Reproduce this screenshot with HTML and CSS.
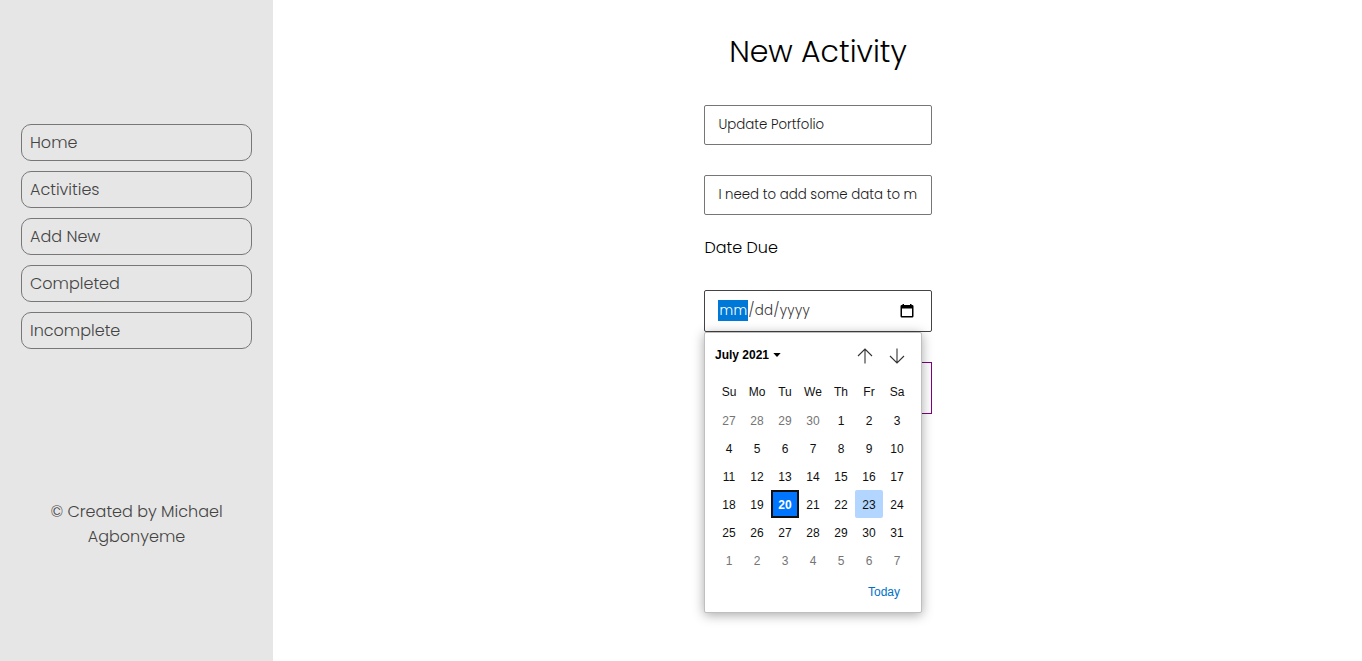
FILE: index.html
```html
<!DOCTYPE html>
<html lang="en">
<head>
<meta charset="utf-8">
<title>New Activity</title>
<link rel="stylesheet" href="styles.css">
</head>
<body>
<aside class="sidebar">
  <nav class="nav">
    <a class="nav-link">Home</a>
    <a class="nav-link">Activities</a>
    <a class="nav-link">Add New</a>
    <a class="nav-link">Completed</a>
    <a class="nav-link">Incomplete</a>
  </nav>
  <footer class="credit">© Created by Michael<br>Agbonyeme</footer>
</aside>
<main class="main">
  <h1 class="title">New Activity</h1>
  <form class="form">
    <div class="field">Update Portfolio</div>
    <div class="field details">I need to add some data to m</div>
    <div class="label">Date Due</div>
    <div class="field date">
      <span class="date-text"><span class="month">mm</span><span class="rest">/dd/yyyy</span></span>
      <svg class="cal-icon" width="14" height="14" viewBox="0 0 14 14"><path d="M2.500 0H4v1h6V0h1.500v1h.7q1.300 0 1.300 1.200v10q0 1.300-1.300 1.300H1.800q-1.300 0-1.300-1.300v-10Q.5 1 1.800 1h.7zM2 4.500V12h10V4.500z" fill="#000" fill-rule="evenodd"/></svg>
      <div class="picker">
        <div class="picker-head">
          <span class="picker-month">July 2021</span>
          <svg class="caret" width="8" height="4" viewBox="0 0 8 4"><path d="M.3 0h7.400L4 4z"/></svg>
          <svg class="arrow up" width="16" height="16" viewBox="0 0 16 16"><path d="M8 15.500V1M1 8l7-7 7 7"/></svg>
          <svg class="arrow" width="16" height="16" viewBox="0 0 16 16"><path d="M8 .5V15M1 8l7 7 7-7"/></svg>
        </div>
        <div class="grid week"><b>Su</b><b>Mo</b><b>Tu</b><b>We</b><b>Th</b><b>Fr</b><b>Sa</b></div>
        <div class="grid days">
          <i class="out">27</i><i class="out">28</i><i class="out">29</i><i class="out">30</i><i>1</i><i>2</i><i>3</i>
          <i>4</i><i>5</i><i>6</i><i>7</i><i>8</i><i>9</i><i>10</i>
          <i>11</i><i>12</i><i>13</i><i>14</i><i>15</i><i>16</i><i>17</i>
          <i>18</i><i>19</i><i class="selected">20</i><i>21</i><i>22</i><i class="hover">23</i><i>24</i>
          <i>25</i><i>26</i><i>27</i><i>28</i><i>29</i><i>30</i><i>31</i>
          <i class="out">1</i><i class="out">2</i><i class="out">3</i><i class="out">4</i><i class="out">5</i><i class="out">6</i><i class="out">7</i>
        </div>
        <div class="today">Today</div>
      </div>
    </div>
    <div class="submit"></div>
  </form>
</main>
</body>
</html>
```
FILE: styles.css
```css
* { box-sizing: border-box; }
body {
  margin: 0;
  height: 661px;
  display: flex;
  overflow: hidden;
  background: #fff;
  font: 300 16px/25px Poppins, Inter, "Open Sans", sans-serif;
  color: #000;
}
.sidebar {
  width: 273px;
  height: 661px;
  padding: 124px 21px 0;
  background: #e6e6e6;
  color: #444;
}
.nav { display: flex; flex-direction: column; gap: 10px; }
.nav-link {
  height: 37px;
  padding: 0 8px;
  border: 1px solid #777;
  border-radius: 10px;
  line-height: 35px;
}
.credit { margin-top: 150px; text-align: center; white-space: nowrap; }
.main { flex: 1; padding-left: 1px; display: flex; flex-direction: column; align-items: center; }
.title { margin: 28px 0 0; font-size: 30px; font-weight: 300; line-height: 47px; white-space: nowrap; }
.form { width: 228px; margin-top: 30px; }
.field {
  height: 40px;
  padding: 0 13px 0 13.4px;
  border: 1px solid #767676;
  border-radius: 2px;
  font-size: 13.333px;
  line-height: 37px;
  white-space: nowrap;
  color: #1a1a1a;
}
.details { margin-top: 30px; }
.label { margin-top: 20px; padding-left: .4px; }
.date {
  position: relative;
  display: flex;
  align-items: center;
  justify-content: space-between;
  height: 42px;
  margin-top: 30px;
  padding: 0 13px;
  border-color: #444;
  color: #333;
}
.date-text { display: flex; margin-bottom: 1px; line-height: 21px; }
.month { width: 30px; padding-left: 1.500px; background: #0078d7; color: #fff; letter-spacing: .4px; }
.rest { padding-left: .5px; letter-spacing: .35px; }
.cal-icon { margin-right: 4px; }
.picker {
  position: absolute;
  z-index: 1;
  top: 41px;
  left: -1px;
  width: 218px;
  height: 281px;
  padding: 0 10px;
  border: 1px solid #bfbfbf;
  border-radius: 2px;
  background: #fff;
  box-shadow: 0 2px 12px rgba(0, 0, 0, .35);
  font: 12px/28px "Liberation Sans", Arial, sans-serif;
  color: #101010;
}
.picker-head { display: flex; align-items: center; height: 45px; padding-right: 6px; }
.picker-month { margin-bottom: 1px; font-weight: 700; color: #000; }
.caret { margin: 0 0 1px 3.500px; fill: #000; }
.arrow { margin: 1px 0 0 16px; fill: none; stroke: #333; stroke-width: 1.1; }
.up { margin-left: auto; }
.grid { display: grid; grid-template-columns: repeat(7, 28px); grid-auto-rows: 28px; text-align: center; }
.days { line-height: 30px; }
.grid b, .grid i { font-weight: 400; font-style: normal; }
.grid .out { color: #757575; }
.grid .selected { border: 2px solid #101010; background: #0075ff; color: #fff; font-weight: 700; line-height: 26px; }
.grid .hover { border-radius: 2px; background: #b2d6ff; }
.today { margin-top: 4px; padding-right: 11px; text-align: right; color: #0070c9; }
.submit { height: 52px; margin-top: 30px; border: 1px solid #800080; }
```
